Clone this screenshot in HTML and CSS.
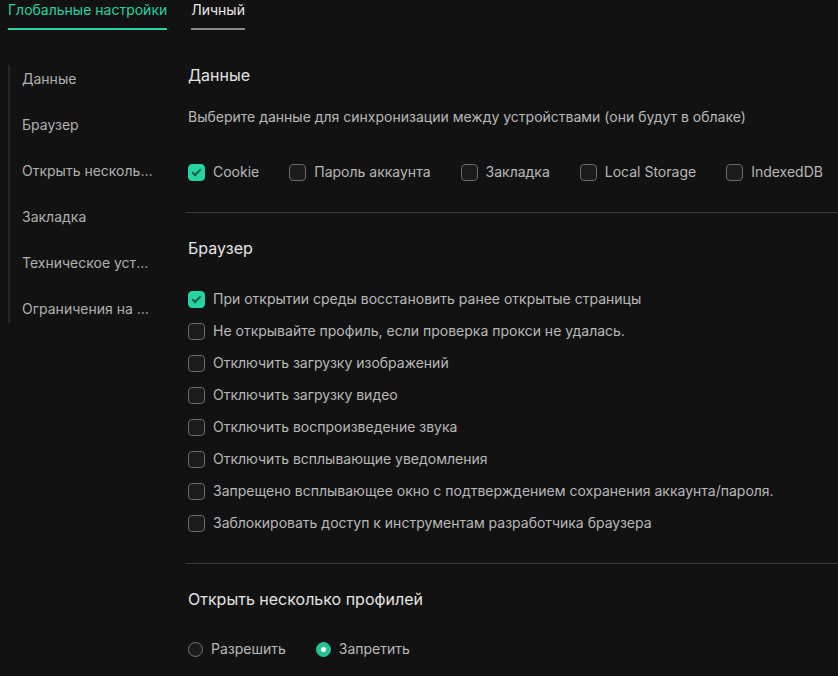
FILE: index.html
```html
<!DOCTYPE html>
<html lang="ru">
<head>
    <meta charset="UTF-8">
    <title>Настройки</title>
    <link rel="stylesheet" href="styles.css">
</head>
<body>
    <div class="tabs">
        <div class="tab active">Глобальные настройки</div>
        <div class="tab">Личный</div>
    </div>

    <div class="main">
        <ul class="sidebar">
            <li>Данные</li>
            <li>Браузер</li>
            <li>Открыть несколько профилей</li>
            <li>Закладка</li>
            <li>Техническое устройство</li>
            <li>Ограничения на доступ</li>
        </ul>

        <div class="content">
            <div class="section first">
                <h2>Данные</h2>
                <p class="desc">Выберите данные для синхронизации между устройствами (они будут в облаке)</p>
                <div class="row">
                    <label class="check"><span class="box on"></span>Cookie</label>
                    <label class="check"><span class="box"></span>Пароль аккаунта</label>
                    <label class="check"><span class="box"></span>Закладка</label>
                    <label class="check"><span class="box"></span>Local Storage</label>
                    <label class="check"><span class="box"></span>IndexedDB</label>
                </div>
            </div>

            <div class="section">
                <h2>Браузер</h2>
                <div class="list">
                    <label class="check"><span class="box on"></span>При открытии среды восстановить ранее открытые страницы</label>
                    <label class="check"><span class="box"></span>Не открывайте профиль, если проверка прокси не удалась.</label>
                    <label class="check"><span class="box"></span>Отключить загрузку изображений</label>
                    <label class="check"><span class="box"></span>Отключить загрузку видео</label>
                    <label class="check"><span class="box"></span>Отключить воспроизведение звука</label>
                    <label class="check"><span class="box"></span>Отключить всплывающие уведомления</label>
                    <label class="check"><span class="box"></span>Запрещено всплывающее окно с подтверждением сохранения аккаунта/пароля.</label>
                    <label class="check"><span class="box"></span>Заблокировать доступ к инструментам разработчика браузера</label>
                </div>
            </div>

            <div class="section last">
                <h2>Открыть несколько профилей</h2>
                <div class="radios">
                    <label class="radio"><span class="dot"></span>Разрешить</label>
                    <label class="radio"><span class="dot on"></span>Запретить</label>
                </div>
            </div>
        </div>
    </div>
</body>
</html>
```

FILE: styles.css
```css
body {
    margin: 0;
    background: #121212;
    font-family: Inter, "Noto Sans", sans-serif;
    font-size: 14px;
    color: #b8b8b8;
    overflow: hidden;
}
.tabs {
    display: flex;
    gap: 24px;
    padding: 0 8px;
}
.tab {
    line-height: 20px;
    padding-bottom: 8px;
    border-bottom: 2px solid #8a8a8a;
    color: #e8e8e8;
}
.tab.active {
    color: #25d3a3;
    border-bottom-color: #25d3a3;
}
.main {
    display: flex;
    margin-top: 33px;
}
.sidebar {
    list-style: none;
    margin: 2px 0 0 8px;
    padding: 4px 0 4px 12px;
    border-left: 2px solid #262626;
    width: 132px;
    flex-shrink: 0;
    display: flex;
    flex-direction: column;
    gap: 26px;
    align-self: flex-start;
}
.sidebar li {
    line-height: 20px;
    color: #b0b0b0;
    white-space: nowrap;
    overflow: hidden;
    text-overflow: ellipsis;
}
.content {
    flex: 1;
    margin-left: 34px;
}
.section {
    padding: 23px 0 30px 0;
    border-bottom: 1px solid #3c3c3c;
    margin-left: -2px;
    padding-left: 2px;
}
.section.first {
    padding-top: 0;
}
.section.last {
    border-bottom: none;
}
h2 {
    margin: 0;
    font-size: 16px;
    font-weight: 400;
    line-height: 24px;
    color: #e4e4e4;
}
.desc {
    margin: 20px 0 35px 0;
    line-height: 20px;
}
.row {
    display: flex;
    gap: 30px;
    white-space: nowrap;
}
.list {
    margin-top: 29px;
    display: flex;
    flex-direction: column;
    gap: 12px;
}
.check, .radio {
    display: flex;
    align-items: center;
    flex-shrink: 0;
    line-height: 20px;
    white-space: nowrap;
}
.box {
    flex-shrink: 0;
    width: 15px;
    height: 15px;
    margin: 0 8px 0 0;
    border: 1.5px solid #6a6a6a;
    border-radius: 4px;
    background: #1b1b1b;
    position: relative;
}
.box.on {
    background: #25d3a3;
    border-color: #25d3a3;
}
.box.on::after {
    content: "";
    position: absolute;
    left: 5px;
    top: 2.5px;
    width: 3px;
    height: 7px;
    border: solid #165c48;
    border-width: 0 2px 2px 0;
    transform: rotate(45deg);
}
.radios {
    margin-top: 28px;
    display: flex;
    gap: 30px;
}
.dot {
    flex-shrink: 0;
    width: 13px;
    height: 13px;
    margin: 0 8px 0 0;
    border: 1.5px solid #777;
    border-radius: 50%;
    background: #1b1b1b;
    position: relative;
}
.dot.on {
    background: #25c494;
    border-color: #25c494;
}
.dot.on::after {
    content: "";
    position: absolute;
    left: 4px;
    top: 4px;
    width: 5px;
    height: 5px;
    border-radius: 50%;
    background: #fff;
}
```
